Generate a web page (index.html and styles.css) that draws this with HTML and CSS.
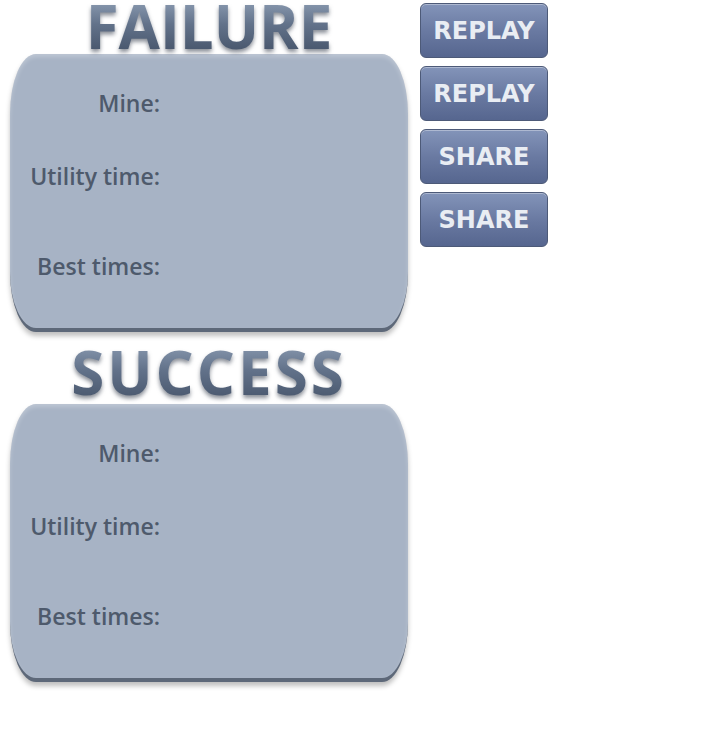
FILE: index.html
```html
<!DOCTYPE html>
<html>
<head>
<meta charset="utf-8">
<link rel="stylesheet" href="styles.css">
</head>
<body>
<div class="page">
  <div class="results">
    <section class="result">
      <h1 class="title">FAILURE</h1>
      <div class="panel">
        <div class="row row-mine"><span class="label">Mine:</span></div>
        <div class="row row-util"><span class="label">Utility time:</span></div>
        <div class="row row-best"><span class="label">Best times:</span></div>
      </div>
    </section>
    <section class="result result-success">
      <h1 class="title">SUCCESS</h1>
      <div class="panel">
        <div class="row row-mine"><span class="label">Mine:</span></div>
        <div class="row row-util"><span class="label">Utility time:</span></div>
        <div class="row row-best"><span class="label">Best times:</span></div>
      </div>
    </section>
  </div>
  <div class="actions">
    <button class="btn">REPLAY</button>
    <button class="btn">REPLAY</button>
    <button class="btn">SHARE</button>
    <button class="btn">SHARE</button>
  </div>
</div>
</body>
</html>
```
FILE: styles.css
```css
html, body {
  margin: 0;
  padding: 0;
  background: #ffffff;
}
.page {
  display: flex;
  align-items: flex-start;
  width: 718px;
  height: 750px;
}
.results {
  width: 420px;
  display: flex;
  flex-direction: column;
}
.result {
  display: flex;
  flex-direction: column;
  align-items: center;
  padding-left: 10px;
  width: 398px;
}
.result-success {
  margin-top: 10px;
}
.title {
  box-sizing: border-box;
  margin: 0;
  height: 54px;
  padding-top: 4px;
  font-family: "Open Sans", sans-serif;
  font-weight: 700;
  font-size: 60px;
  line-height: 44px;
  background: linear-gradient(180deg, #8b9bb1 0%, #62728a 45%, #46546a 100%);
  -webkit-background-clip: text;
  background-clip: text;
  color: transparent;
  filter: drop-shadow(0 3px 2px rgba(40, 50, 65, 0.55));
}
.result-success .title {
  height: 62px;
  padding-top: 8px;
  letter-spacing: 3px;
}
.panel {
  box-sizing: border-box;
  width: 398px;
  height: 278px;
  background: #a7b3c5;
  border-radius: 26px / 60px;
  border-bottom: 4px solid #5d6879;
  box-shadow: 0 4px 5px rgba(0, 0, 0, 0.25), inset 0 3px 4px rgba(255, 255, 255, 0.25);
  display: flex;
  flex-direction: column;
}
.row {
  display: flex;
  justify-content: flex-end;
  width: 150px;
  height: 30px;
  align-items: center;
}
.label {
  font-family: "Open Sans", sans-serif;
  font-weight: 600;
  font-size: 23px;
  color: #4e5a6c;
  white-space: nowrap;
}
.row-mine { margin-top: 34px; }
.row-util { margin-top: 43px; }
.row-best { margin-top: 60px; }
.actions {
  display: flex;
  flex-direction: column;
  gap: 8px;
  padding-top: 3px;
}
.btn {
  width: 128px;
  height: 55px;
  border: 1px solid #4d5a78;
  border-radius: 6px;
  background: linear-gradient(180deg, #8394b9 0%, #6a7aa2 50%, #56668f 100%);
  box-shadow: inset 0 1px 0 rgba(255, 255, 255, 0.35);
  color: #e9edf3;
  font-family: "DejaVu Sans", sans-serif;
  font-weight: 700;
  font-size: 24px;
  padding: 0;
  text-align: center;
}
```
